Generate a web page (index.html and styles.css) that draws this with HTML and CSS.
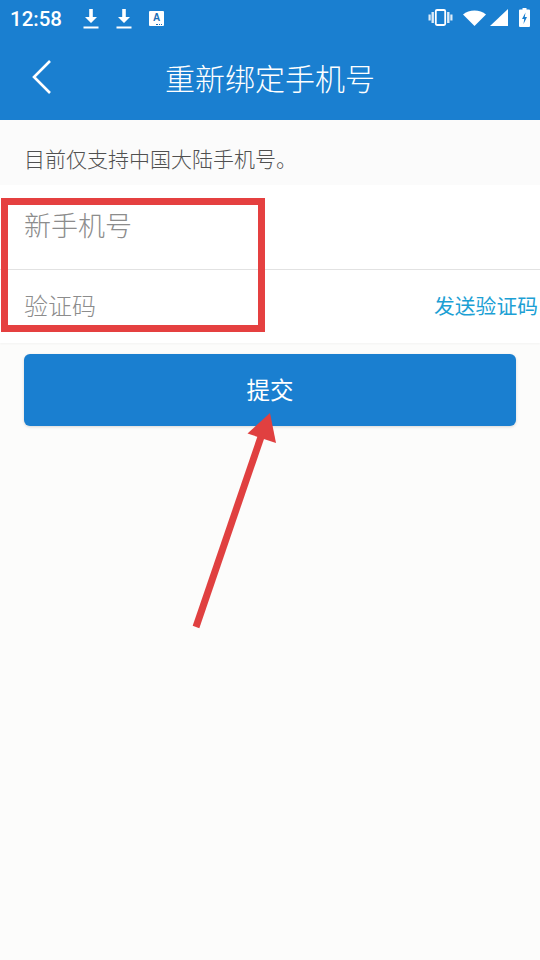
FILE: index.html
```html
<!DOCTYPE html>
<html lang="zh-CN">
<head>
  <meta charset="UTF-8" />
  <meta name="viewport" content="width=device-width, initial-scale=1" />
  <title>重新绑定手机号</title>
  <link rel="stylesheet" href="styles.css">
</head>
<body>
  <header class="appbar">
    <div class="statusbar">
      <span class="clock">12:58</span>
      <svg class="st-icon" width="16" height="22" viewBox="0 0 16 22"><path d="M6.200 1h3.600v8H14l-6 6-6-6h4.200z" fill="#fff"/><rect x="0.500" y="18.500" width="15" height="2" fill="#fff"/></svg>
      <svg class="st-icon dl2" width="16" height="22" viewBox="0 0 16 22"><path d="M6.200 1h3.600v8H14l-6 6-6-6h4.200z" fill="#fff"/><rect x="0.500" y="18.500" width="15" height="2" fill="#fff"/></svg>
      <span class="a-badge">A</span>
      <div class="st-right">
        <svg class="vibrate" width="25" height="17" viewBox="0 0 25 17"><rect x="7.800" y="1" width="9.400" height="15" rx="1.200" fill="none" stroke="#fff" stroke-width="1.800"/><g fill="#fff" opacity=".85"><rect x="3.500" y="3" width="2.400" height="11"/><rect x="0.500" y="5.500" width="2.200" height="6"/><rect x="19.100" y="3" width="2.400" height="11"/><rect x="22.300" y="5.500" width="2.200" height="6"/></g></svg>
        <svg class="wifi" width="23" height="16" viewBox="0 0 23 16"><path d="M0 4.500C6-1 17-1 23 4.500L11.500 16z" fill="#fff"/></svg>
        <svg class="signal" width="18" height="17" viewBox="0 0 18 17"><path d="M18 0v17H0z" fill="#fff"/></svg>
        <svg class="batt" width="11" height="19" viewBox="0 0 11 19"><path d="M3.500 0h4v1.500H10a1 1 0 0 1 1 1V18a1 1 0 0 1-1 1H1a1 1 0 0 1-1-1V2.500a1 1 0 0 1 1-1h2.500z" fill="#fff"/><path d="M6.500 4.500 3 11h2.200L4.500 16 8 9H5.800z" fill="#1a7fd0"/></svg>
      </div>
    </div>
    <div class="toolbar">
      <svg class="back" width="22" height="36" viewBox="0 0 22 36"><path d="M19 2 3 18l16 16" fill="none" stroke="#fff" stroke-width="2.600"/></svg>
      <h1>重新绑定手机号</h1>
    </div>
  </header>

  <p class="tip">目前仅支持中国大陆手机号。</p>

  <section class="fields">
    <div class="field field-phone">新手机号</div>
    <div class="field field-code">
      <span>验证码</span>
      <a class="send">发送验证码</a>
    </div>
  </section>

  <button class="submit">提交</button>

  <!-- red annotations on top of the screenshot -->
  <div class="mark-box"></div>
  <svg class="mark-arrow" width="540" height="960" viewBox="0 0 540 960"><path d="M196 627 263 431" stroke="#e04040" stroke-width="7" fill="none"/><path d="M270 413 247.500 433.500 276 443z" fill="#e04040"/></svg>
</body>
</html>
```

FILE: styles.css
```css
* {
  box-sizing: border-box;
}

body {
  margin: 0;
  height: 960px;
  overflow: hidden;
  position: relative;
  font-family: "Noto Sans CJK SC", "Noto Sans", sans-serif;
  font-weight: 300;
  background: #fcfcfb;
}

.appbar {
  height: 120px;
  background: #1a7fd0;
  box-shadow: 0 1px 3px rgba(0, 0, 0, 0.12);
}

.statusbar {
  height: 37px;
  display: flex;
  align-items: center;
  padding: 0 10px;
  color: #fff;
}

.clock {
  font-family: Roboto, sans-serif;
  font-size: 20.500px;
  font-weight: 500;
  width: 73px;
}

.dl2 {
  margin-left: 17px;
}

.a-badge {
  position: relative;
  width: 15px;
  height: 15px;
  margin-left: 17px;
  background: #fff;
  border-radius: 1px;
  color: #1a6fb8;
  font: bold 10px/13px "Liberation Sans", sans-serif;
  text-align: center;
}

.a-badge::after {
  content: "";
  position: absolute;
  right: 2px;
  bottom: 1px;
  width: 6px;
  border-bottom: 1px dotted #1a6fb8;
}

.st-right {
  margin-left: auto;
  padding-bottom: 2px;
  display: flex;
  align-items: center;
}

.wifi {
  margin-left: 10px;
}

.signal {
  margin-left: 4px;
}

.batt {
  margin-left: 11px;
}

.toolbar {
  height: 83px;
  padding-bottom: 4px;
  position: relative;
  display: flex;
  align-items: center;
  justify-content: center;
}

.back {
  position: absolute;
  left: 31px;
  top: 22px;
}

.toolbar h1 {
  margin: 0;
  font-size: 30px;
  font-weight: 300;
  line-height: 40px;
  color: #fff;
}

.tip {
  margin: 0;
  height: 65px;
  padding: 11px 24px 0;
  display: flex;
  align-items: center;
  font-size: 21px;
  color: #505050;
  background: #fbfbfb;
}

.fields {
  background: #fff;
  height: 158px;
  box-shadow: 0 1px 2px rgba(0, 0, 0, 0.04);
}

.field {
  padding-left: 24px;
  font-size: 24px;
  color: #8c8c8c;
}

.field-phone {
  height: 85px;
  padding-top: 20px;
  font-size: 27px;
  line-height: 40px;
  border-bottom: 1px solid #e2e2e2;
}

.field-code {
  height: 73px;
  padding-top: 15px;
  line-height: 40px;
  display: flex;
  justify-content: space-between;
}

.send {
  font-size: 20.800px;
  font-weight: 400;
  color: #1ca0d4;
  padding-right: 2px;
}

.submit {
  display: block;
  width: 492px;
  height: 72px;
  margin: 11px 24px 0;
  padding-bottom: 4px;
  background: #1a7fd0;
  color: #fff;
  border: none;
  border-radius: 6px;
  font-family: inherit;
  font-weight: 400;
  font-size: 23.500px;
  box-shadow: 0 1px 3px rgba(0, 0, 0, 0.15);
}

.mark-box {
  position: absolute;
  left: 1px;
  top: 198px;
  width: 264px;
  height: 134px;
  border: 7px solid #e54040;
}

.mark-arrow {
  position: absolute;
  left: 0;
  top: 0;
}
```
